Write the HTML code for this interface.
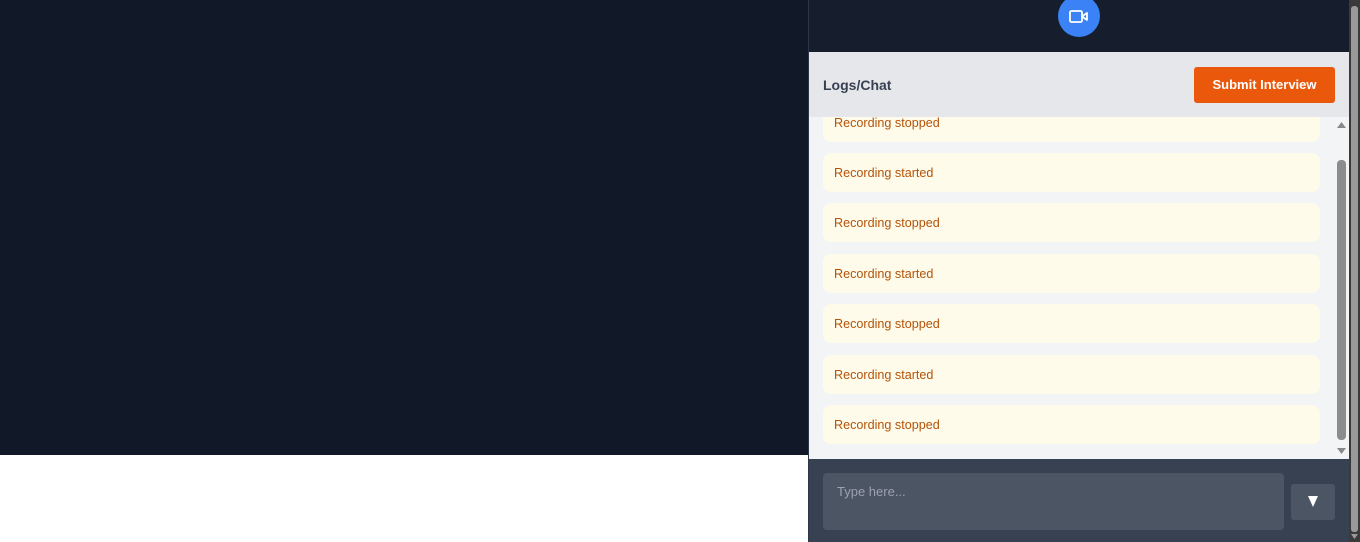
<!DOCTYPE html>
<html><head><style>
*{margin:0;padding:0;box-sizing:border-box}
body{width:1360px;height:542px;overflow:hidden;background:#fff;font-family:"Liberation Sans",sans-serif;position:relative}
.left{position:absolute;left:0;top:0;width:808px;height:455px;background:#111827}
.panel{position:absolute;left:808px;top:0;width:541px;height:542px;border-left:1px solid #2d3748;background:#161d2c}
.cam{position:absolute;left:1058px;top:-5px;width:42px;height:42px;border-radius:50%;background:#3b82f6}
.hdr{position:absolute;left:809px;top:52px;width:540px;height:65px;background:#e5e7eb}
.hdr .t{position:absolute;left:14px;top:25px;font-size:14px;font-weight:bold;color:#374151}
.btn{position:absolute;left:385px;top:15px;width:141px;height:36px;background:#ea580c;border-radius:3px;color:#fff;font-weight:bold;font-size:13px;text-align:center;line-height:36px}
.list{position:absolute;left:809px;top:117px;width:540px;height:342px;background:#f3f4f6;overflow:hidden}
.item{position:absolute;left:14px;width:497px;height:39px;background:#fefbea;border-radius:8px;color:#b45309;font-size:12.6px;padding-left:11px;line-height:40px}
.sb{position:absolute;left:1334px;top:117px;width:15px;height:342px;background:#f3f4f6}
.thumb{position:absolute;left:1337px;top:160px;width:9px;height:280px;background:#8c8c8c;border-radius:4px}
.foot{position:absolute;left:809px;top:459px;width:540px;height:83px;background:#374151}
.inp{position:absolute;left:14px;top:14px;width:461px;height:57px;background:#4b5563;border-radius:4px;color:#9ca3af;font-size:13px;padding:11px 14px}
.send{position:absolute;left:482px;top:25px;width:44px;height:36px;background:#4b5563;border-radius:3px}
.psb{position:absolute;left:1349px;top:0;width:11px;height:542px;background:#3a3a3a}
.psb div{position:absolute;left:2px;top:6px;width:7px;height:526px;background:#9a9a9a;border-radius:3px}
</style></head><body>
<div class="left"></div>
<div class="panel"></div>
<div class="cam"><svg width="42" height="42" viewBox="0 0 42 42"><rect x="12" y="16" width="12" height="11" rx="1.5" fill="none" stroke="#fff" stroke-width="1.8"/><path d="M24 21.5 L29 18 V25 Z" fill="none" stroke="#fff" stroke-width="1.8" stroke-linejoin="round"/></svg></div>
<div class="hdr"><div class="t">Logs/Chat</div><div class="btn">Submit Interview</div></div>
<div class="list">
<div class="item" style="top:-15px;height:40px;line-height:16px;padding-top:13px">Recording stopped</div>
<div class="item" style="top:36px">Recording started</div>
<div class="item" style="top:86px">Recording stopped</div>
<div class="item" style="top:137px">Recording started</div>
<div class="item" style="top:187px">Recording stopped</div>
<div class="item" style="top:238px">Recording started</div>
<div class="item" style="top:288px">Recording stopped</div>
</div>
<div class="sb"><svg width="15" height="342"><path d="M3 11 L7.5 5 L12 11Z" fill="#888"/><path d="M3 331 L7.5 337 L12 331Z" fill="#888"/></svg></div>
<div class="thumb"></div>
<div class="foot"><div class="inp">Type here...</div><div class="send"><svg width="44" height="36"><path d="M17 12 L27 12 L22 23 Z" fill="#fff"/></svg></div></div>
<div class="psb"><div></div><svg style="position:absolute;left:0;top:532px" width="11" height="10"><path d="M2 2 L9 2 L5.5 7Z" fill="#9a9a9a"/></svg></div>
</body></html>
